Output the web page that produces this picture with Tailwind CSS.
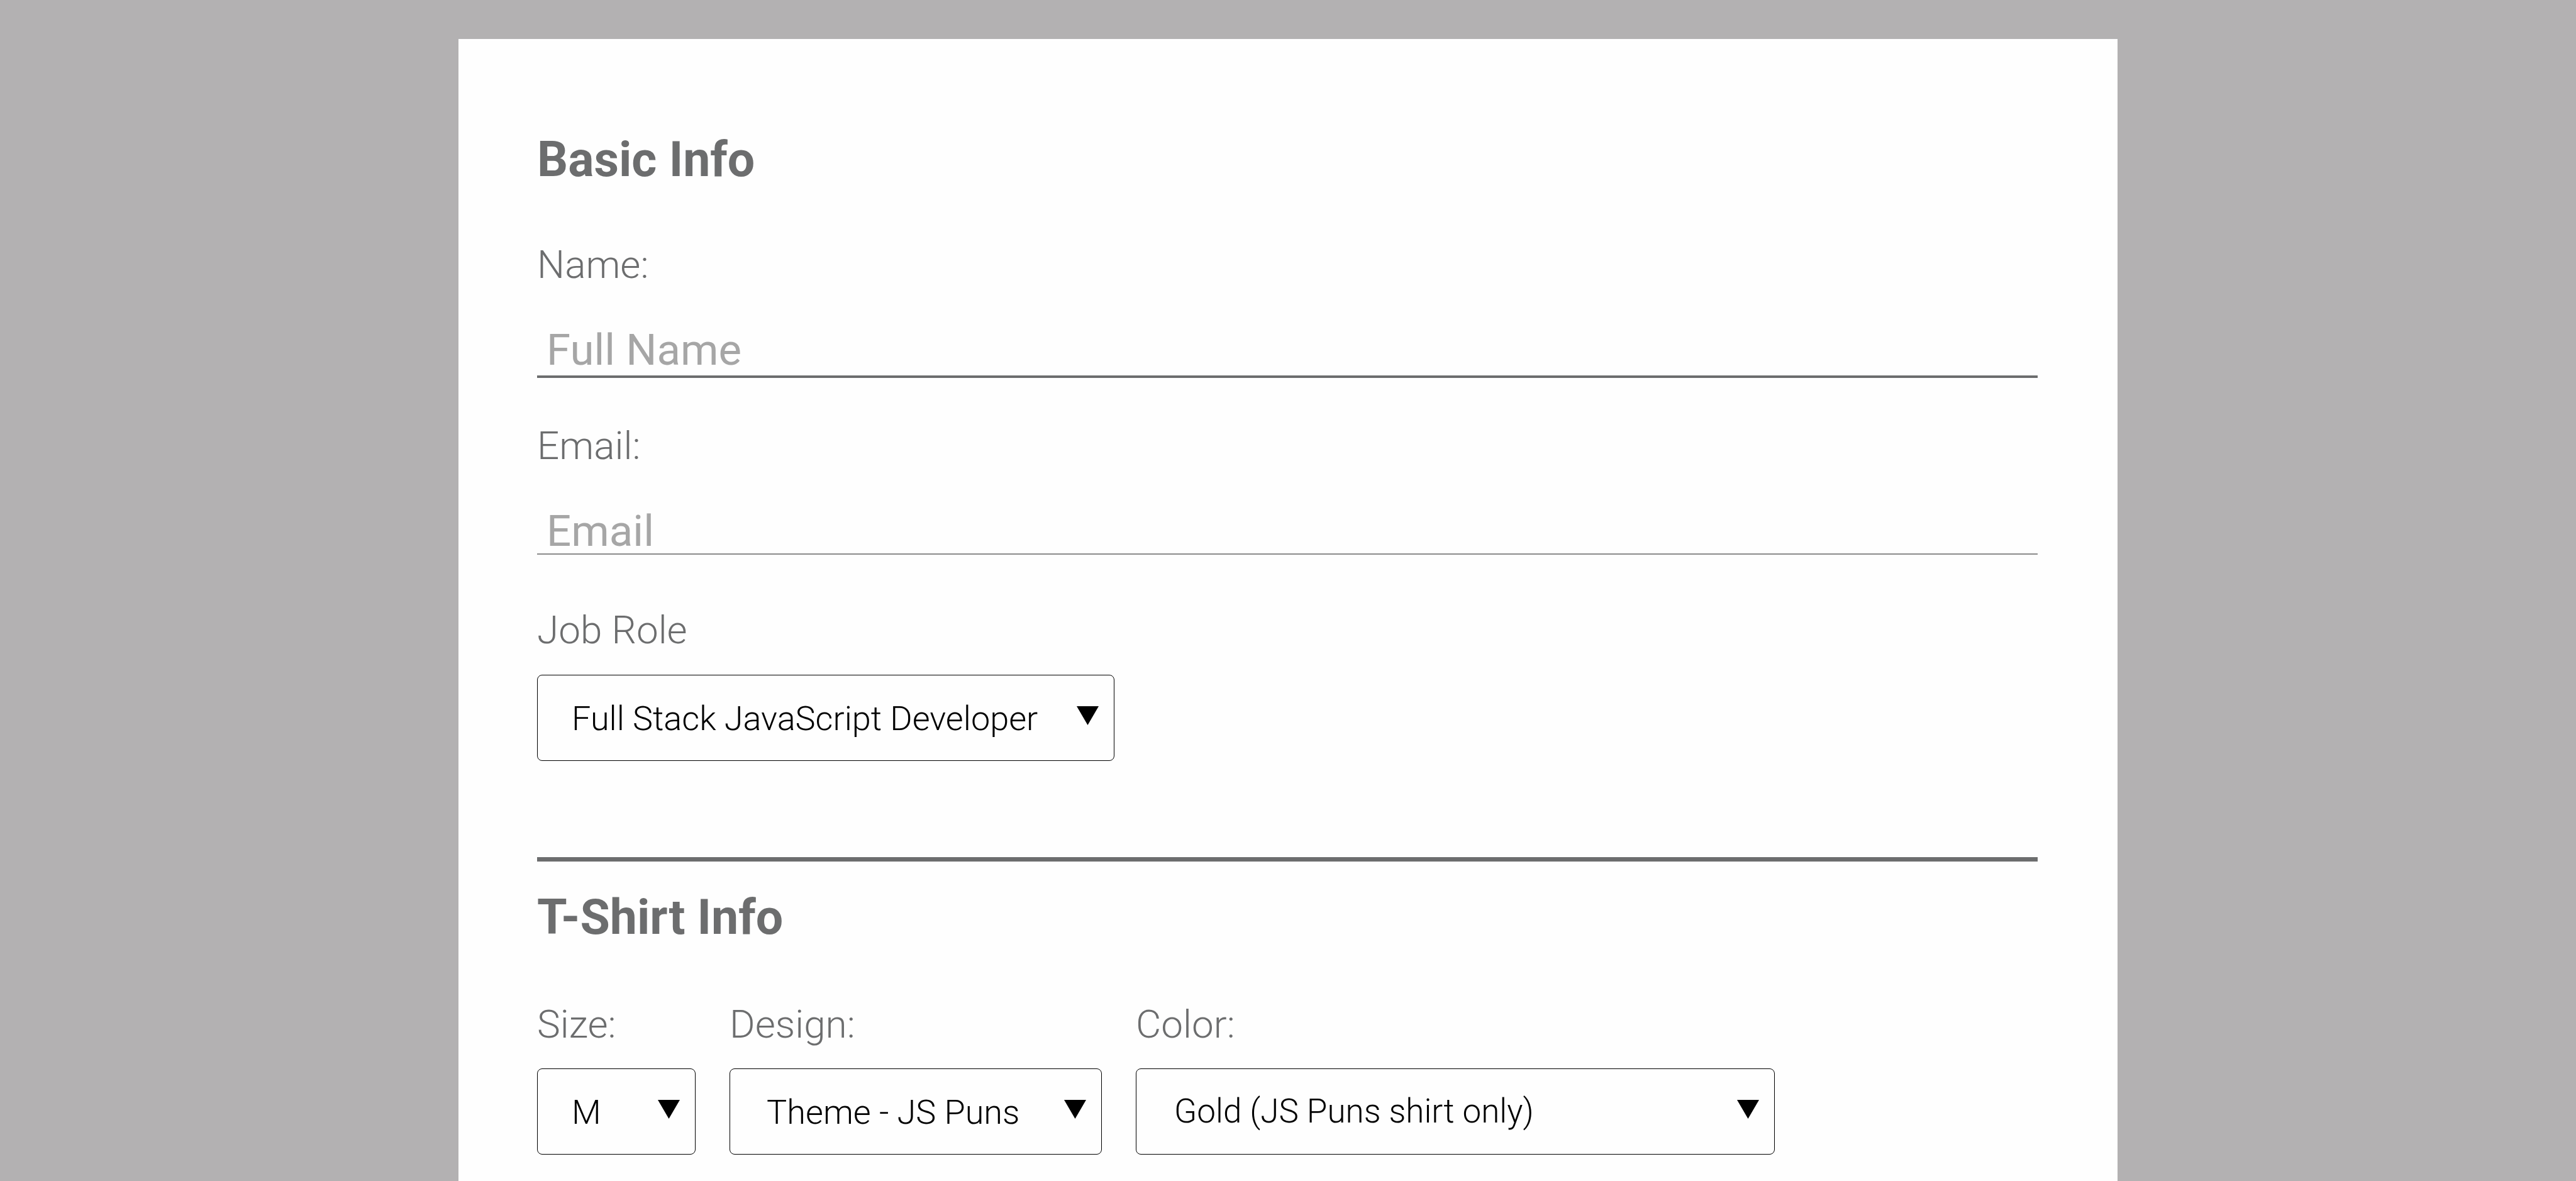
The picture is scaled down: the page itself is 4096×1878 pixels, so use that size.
<!DOCTYPE html>
<html lang="en">
<head>
<meta charset="utf-8">
<title>Registration Form</title>
<script src="https://cdn.jsdelivr.net/npm/@tailwindcss/browser@4"></script>
</head>
<body class="flex min-h-screen flex-col bg-[#b3b1b2] pt-[62px] font-['Roboto',sans-serif] text-[#6c6d6e]">
<form class="mx-auto w-[64.4%] grow bg-[#fefefe] pt-[146px] pr-[127px] pl-[125px]">
  <section class="flex flex-col items-start">
    <h2 class="text-[77px] leading-[92px] font-bold">Basic Info</h2>

    <label for="name" class="mt-[85px] text-[62px] leading-[72px] font-light">Name:</label>
    <input id="name" type="text" placeholder="Full Name" class="mt-[65px] box-content h-[70px] w-full border-b-4 border-[#6c6d6e] pb-[5px] text-[69px] leading-[70px] font-normal indent-[15px] outline-none placeholder:text-[#a6a6a6]">

    <label for="email" class="mt-[72px] text-[62px] leading-[72px] font-light">Email:</label>
    <input id="email" type="email" placeholder="Email" class="mt-[65px] box-content h-[70px] w-full border-b-2 border-[#8a8a8a] text-[69px] leading-[70px] font-normal indent-[15px] outline-none placeholder:text-[#a6a6a6]">

    <label for="role" class="mt-[84px] text-[62px] leading-[72px] font-light">Job Role</label>
    <div class="relative mt-[35px]">
      <select id="role" class="block h-[137px] w-[918px] appearance-none rounded-lg border border-black bg-[#fefefe] pt-px pl-[54px] text-[54px] font-light text-black">
        <option>Full Stack JavaScript Developer</option>
      </select>
      <svg class="pointer-events-none absolute top-[50px] right-[25px] h-[30px] w-[35px]" viewBox="0 0 35 30" aria-hidden="true"><path d="M0 0H35L17.500 30Z"/></svg>
    </div>
  </section>

  <hr class="mt-[153px] h-[7px] border-0 bg-[#6c6d6e]">

  <section class="mt-[43px]">
    <h2 class="text-[77px] leading-[92px] font-bold">T-Shirt Info</h2>
    <div class="mt-[88px] flex flex-wrap gap-x-[54px]">
      <div class="flex flex-col">
        <label for="size" class="text-[62px] leading-[72px] font-light">Size:</label>
        <div class="relative mt-[34px]">
          <select id="size" class="block h-[137px] w-[252px] appearance-none rounded-lg border border-black bg-[#fefefe] pt-px pl-[54px] text-[54px] font-light text-black">
            <option>M</option>
          </select>
          <svg class="pointer-events-none absolute top-[50px] right-[25px] h-[30px] w-[35px]" viewBox="0 0 35 30" aria-hidden="true"><path d="M0 0H35L17.500 30Z"/></svg>
        </div>
      </div>
      <div class="flex flex-col">
        <label for="design" class="text-[62px] leading-[72px] font-light">Design:</label>
        <div class="relative mt-[34px]">
          <select id="design" class="block h-[137px] w-[592px] appearance-none rounded-lg border border-black bg-[#fefefe] pt-px pl-[58px] text-[54px] font-light text-black">
            <option>Theme - JS Puns</option>
          </select>
          <svg class="pointer-events-none absolute top-[50px] right-[25px] h-[30px] w-[35px]" viewBox="0 0 35 30" aria-hidden="true"><path d="M0 0H35L17.500 30Z"/></svg>
        </div>
      </div>
      <div class="flex flex-col">
        <label for="color" class="text-[62px] leading-[72px] font-light">Color:</label>
        <div class="relative mt-[34px]">
          <select id="color" class="block h-[137px] w-[1016px] appearance-none rounded-lg border border-black bg-[#fefefe] pt-px pl-[60px] text-[53px] font-light text-black">
            <option>Gold (JS Puns shirt only)</option>
          </select>
          <svg class="pointer-events-none absolute top-[50px] right-[25px] h-[30px] w-[35px]" viewBox="0 0 35 30" aria-hidden="true"><path d="M0 0H35L17.500 30Z"/></svg>
        </div>
      </div>
    </div>
  </section>
</form>
</body>
</html>
